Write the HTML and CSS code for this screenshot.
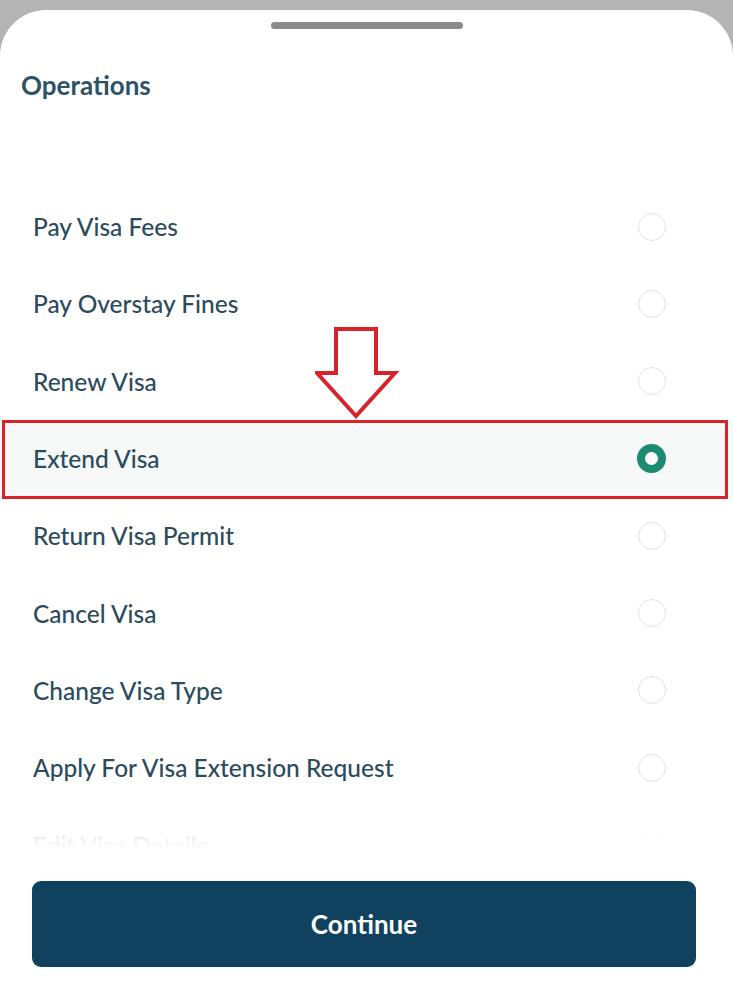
FILE: index.html
```html
<!DOCTYPE html>
<html lang="en">
<head>
<meta charset="utf-8">
<title>Operations</title>
<link rel="stylesheet" href="styles.css">
</head>
<body>
<div class="sheet">
  <div class="handle"></div>
  <h1 class="title">Operations</h1>
  <div class="list-wrap">
    <ul class="list">
      <li class="row"><span class="label">Pay Visa Fees</span><span class="radio"></span></li>
      <li class="row"><span class="label">Pay Overstay Fines</span><span class="radio"></span></li>
      <li class="row"><span class="label">Renew Visa</span><span class="radio"></span></li>
      <li class="row selected"><span class="label">Extend Visa</span><span class="radio on"></span></li>
      <li class="row"><span class="label">Return Visa Permit</span><span class="radio"></span></li>
      <li class="row"><span class="label">Cancel Visa</span><span class="radio"></span></li>
      <li class="row"><span class="label">Change Visa Type</span><span class="radio"></span></li>
      <li class="row"><span class="label">Apply For Visa Extension Request</span><span class="radio"></span></li>
      <li class="row"><span class="label">Edit Visa Details</span><span class="radio"></span></li>
    </ul>
    <div class="fade"></div>
  </div>
  <div class="footer">
    <button class="continue">Continue</button>
  </div>
  <div class="annot-box"></div>
  <svg class="annot-arrow" width="90" height="96" viewBox="0 0 90 96">
    <polygon points="21,2 61,2 61,46 80,46 41,89 2,46 21,46" fill="none" stroke="#d8232a" stroke-width="4" stroke-linejoin="miter"/>
  </svg>
</div>
</body>
</html>
```

FILE: styles.css
```css
* { box-sizing: border-box; }
html, body { margin: 0; padding: 0; }
body {
  background: #b4b4b4;
  font-family: "Lato", "Noto Sans", sans-serif;
  width: 733px;
  height: 989px;
  overflow: hidden;
}
.sheet {
  position: relative;
  margin-top: 10px;
  height: 979px;
  background: #ffffff;
  border-radius: 46px 46px 0 0;
  padding-top: 12px;
}
.handle {
  width: 192px;
  height: 7px;
  border-radius: 4px;
  background: #8b8b90;
  margin: 0 auto;
}
.title {
  margin: 41px 0 0 21px;
  font-size: 26px;
  font-weight: 700;
  color: #2e5367;
  line-height: 30px;
}
.list-wrap {
  position: relative;
  margin-top: 88px;
  height: 661px;
  overflow: hidden;
}
.list {
  list-style: none;
  margin: 0;
  padding: 0;
}
.row {
  height: 77.3px;
  display: flex;
  align-items: center;
  justify-content: space-between;
  padding: 0 67px 0 33px;
}
.row.selected { background: #f7f8f8; }
.label {
  font-size: 24.5px;
  font-weight: 500;
  color: #2c4b5d;
}
.radio {
  width: 28px;
  height: 28px;
  border-radius: 50%;
  border: 1.5px solid #e3e3e3;
  flex: none;
}
.radio.on {
  width: 29px;
  height: 29px;
  border: 8px solid #1d8b71;
  background: #ffffff;
}
.fade {
  position: absolute;
  left: 0; right: 0; bottom: 0;
  height: 40px;
  background: linear-gradient(to bottom, rgba(255,255,255,0.65), #ffffff);
}
.footer {
  padding: 32px 37px 0 32px;
}
.continue {
  display: block;
  width: 100%;
  height: 86px;
  border: none;
  border-radius: 9px;
  background: #10425f;
  color: #ffffff;
  font-family: "Lato", "Noto Sans", sans-serif;
  font-size: 26px;
  font-weight: 700;
}
.annot-box {
  position: absolute;
  left: 2px;
  top: 410px;
  width: 726px;
  height: 79px;
  border: 3.5px solid #d8232a;
}
.annot-arrow {
  position: absolute;
  left: 315px;
  top: 317px;
}
```
